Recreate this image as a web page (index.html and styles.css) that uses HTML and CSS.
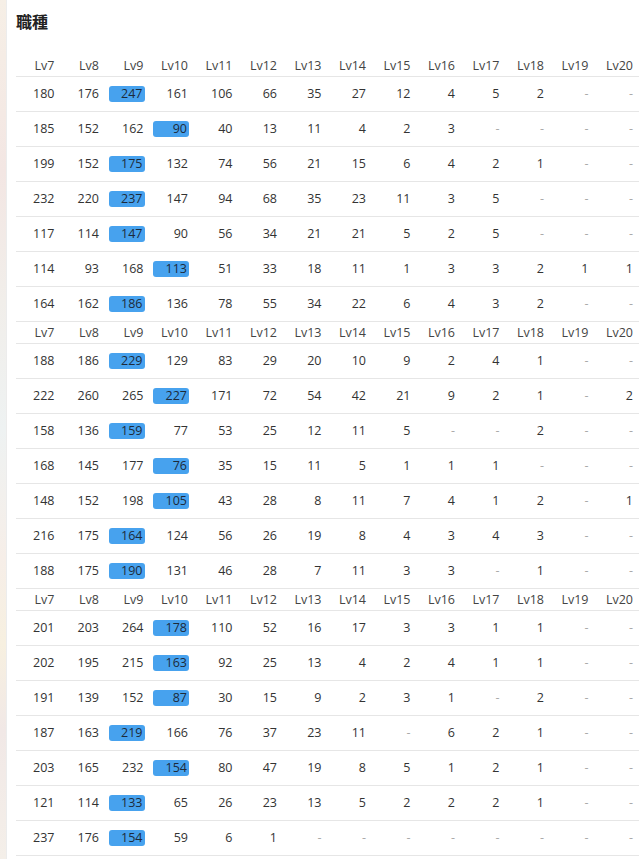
FILE: index.html
```html
<!DOCTYPE html>
<html lang="ja">
<head>
<meta charset="utf-8">
<link rel="stylesheet" href="styles.css">
</head>
<body>
<div class="page">
  <div class="edge"></div>
  <main class="content">
    <h2 class="title">職種</h2>
    <table class="lv-table">
      <colgroup>
        <col><col><col><col><col><col><col><col><col><col><col><col><col><col>
      </colgroup>
      <tbody>
        <tr class="head"><th>Lv7</th><th>Lv8</th><th>Lv9</th><th>Lv10</th><th>Lv11</th><th>Lv12</th><th>Lv13</th><th>Lv14</th><th>Lv15</th><th>Lv16</th><th>Lv17</th><th>Lv18</th><th>Lv19</th><th>Lv20</th></tr>
        <tr><td>180</td><td>176</td><td><span class="hl">247</span></td><td>161</td><td>106</td><td>66</td><td>35</td><td>27</td><td>12</td><td>4</td><td>5</td><td>2</td><td class="na">-</td><td class="na">-</td></tr>
        <tr><td>185</td><td>152</td><td>162</td><td><span class="hl">90</span></td><td>40</td><td>13</td><td>11</td><td>4</td><td>2</td><td>3</td><td class="na">-</td><td class="na">-</td><td class="na">-</td><td class="na">-</td></tr>
        <tr><td>199</td><td>152</td><td><span class="hl">175</span></td><td>132</td><td>74</td><td>56</td><td>21</td><td>15</td><td>6</td><td>4</td><td>2</td><td>1</td><td class="na">-</td><td class="na">-</td></tr>
        <tr><td>232</td><td>220</td><td><span class="hl">237</span></td><td>147</td><td>94</td><td>68</td><td>35</td><td>23</td><td>11</td><td>3</td><td>5</td><td class="na">-</td><td class="na">-</td><td class="na">-</td></tr>
        <tr><td>117</td><td>114</td><td><span class="hl">147</span></td><td>90</td><td>56</td><td>34</td><td>21</td><td>21</td><td>5</td><td>2</td><td>5</td><td class="na">-</td><td class="na">-</td><td class="na">-</td></tr>
        <tr><td>114</td><td>93</td><td>168</td><td><span class="hl">113</span></td><td>51</td><td>33</td><td>18</td><td>11</td><td>1</td><td>3</td><td>3</td><td>2</td><td>1</td><td>1</td></tr>
        <tr><td>164</td><td>162</td><td><span class="hl">186</span></td><td>136</td><td>78</td><td>55</td><td>34</td><td>22</td><td>6</td><td>4</td><td>3</td><td>2</td><td class="na">-</td><td class="na">-</td></tr>
      </tbody>
      <tbody>
        <tr class="head"><th>Lv7</th><th>Lv8</th><th>Lv9</th><th>Lv10</th><th>Lv11</th><th>Lv12</th><th>Lv13</th><th>Lv14</th><th>Lv15</th><th>Lv16</th><th>Lv17</th><th>Lv18</th><th>Lv19</th><th>Lv20</th></tr>
        <tr><td>188</td><td>186</td><td><span class="hl">229</span></td><td>129</td><td>83</td><td>29</td><td>20</td><td>10</td><td>9</td><td>2</td><td>4</td><td>1</td><td class="na">-</td><td class="na">-</td></tr>
        <tr><td>222</td><td>260</td><td>265</td><td><span class="hl">227</span></td><td>171</td><td>72</td><td>54</td><td>42</td><td>21</td><td>9</td><td>2</td><td>1</td><td class="na">-</td><td>2</td></tr>
        <tr><td>158</td><td>136</td><td><span class="hl">159</span></td><td>77</td><td>53</td><td>25</td><td>12</td><td>11</td><td>5</td><td class="na">-</td><td class="na">-</td><td>2</td><td class="na">-</td><td class="na">-</td></tr>
        <tr><td>168</td><td>145</td><td>177</td><td><span class="hl">76</span></td><td>35</td><td>15</td><td>11</td><td>5</td><td>1</td><td>1</td><td>1</td><td class="na">-</td><td class="na">-</td><td class="na">-</td></tr>
        <tr><td>148</td><td>152</td><td>198</td><td><span class="hl">105</span></td><td>43</td><td>28</td><td>8</td><td>11</td><td>7</td><td>4</td><td>1</td><td>2</td><td class="na">-</td><td>1</td></tr>
        <tr><td>216</td><td>175</td><td><span class="hl">164</span></td><td>124</td><td>56</td><td>26</td><td>19</td><td>8</td><td>4</td><td>3</td><td>4</td><td>3</td><td class="na">-</td><td class="na">-</td></tr>
        <tr><td>188</td><td>175</td><td><span class="hl">190</span></td><td>131</td><td>46</td><td>28</td><td>7</td><td>11</td><td>3</td><td>3</td><td class="na">-</td><td>1</td><td class="na">-</td><td class="na">-</td></tr>
      </tbody>
      <tbody>
        <tr class="head"><th>Lv7</th><th>Lv8</th><th>Lv9</th><th>Lv10</th><th>Lv11</th><th>Lv12</th><th>Lv13</th><th>Lv14</th><th>Lv15</th><th>Lv16</th><th>Lv17</th><th>Lv18</th><th>Lv19</th><th>Lv20</th></tr>
        <tr><td>201</td><td>203</td><td>264</td><td><span class="hl">178</span></td><td>110</td><td>52</td><td>16</td><td>17</td><td>3</td><td>3</td><td>1</td><td>1</td><td class="na">-</td><td class="na">-</td></tr>
        <tr><td>202</td><td>195</td><td>215</td><td><span class="hl">163</span></td><td>92</td><td>25</td><td>13</td><td>4</td><td>2</td><td>4</td><td>1</td><td>1</td><td class="na">-</td><td class="na">-</td></tr>
        <tr><td>191</td><td>139</td><td>152</td><td><span class="hl">87</span></td><td>30</td><td>15</td><td>9</td><td>2</td><td>3</td><td>1</td><td class="na">-</td><td>2</td><td class="na">-</td><td class="na">-</td></tr>
        <tr><td>187</td><td>163</td><td><span class="hl">219</span></td><td>166</td><td>76</td><td>37</td><td>23</td><td>11</td><td class="na">-</td><td>6</td><td>2</td><td>1</td><td class="na">-</td><td class="na">-</td></tr>
        <tr><td>203</td><td>165</td><td>232</td><td><span class="hl">154</span></td><td>80</td><td>47</td><td>19</td><td>8</td><td>5</td><td>1</td><td>2</td><td>1</td><td class="na">-</td><td class="na">-</td></tr>
        <tr><td>121</td><td>114</td><td><span class="hl">133</span></td><td>65</td><td>26</td><td>23</td><td>13</td><td>5</td><td>2</td><td>2</td><td>2</td><td>1</td><td class="na">-</td><td class="na">-</td></tr>
        <tr><td>237</td><td>176</td><td><span class="hl">154</span></td><td>59</td><td>6</td><td>1</td><td class="na">-</td><td class="na">-</td><td class="na">-</td><td class="na">-</td><td class="na">-</td><td class="na">-</td><td class="na">-</td><td class="na">-</td></tr>
      </tbody>
    </table>
  </main>
</div>
</body>
</html>
```

FILE: styles.css
```css
html, body {
  margin: 0;
  padding: 0;
  background: #ffffff;
}

body {
  font-family: "Noto Sans CJK JP", "Noto Sans", sans-serif;
  color: #333333;
  overflow: hidden;
}

.page {
  display: flex;
  min-height: 859px;
}

.edge {
  flex: 0 0 6px;
  background: linear-gradient(180deg, #f6efe6 0%, #f3e6e3 20%, #f1eeea 35%, #eef2f2 50%, #f6eee8 65%, #f7f0e0 75%, #f1e8e6 85%, #f4efe9 100%);
  border-right: 1px solid #ececec;
}

.content {
  flex: 1;
  padding-left: 9px;
  min-width: 0;
}

.title {
  margin: 9px 0 0;
  font-size: 16px;
  line-height: 24px;
  font-weight: 700;
  color: #222222;
}

.lv-table {
  margin-top: 22px;
  border-collapse: collapse;
  table-layout: fixed;
  width: 623px;
  font-family: "Open Sans", "Noto Sans", sans-serif;
  font-size: 12.5px;
}

.lv-table col {
  width: 44.5px;
}

.lv-table th,
.lv-table td {
  text-align: right;
  padding: 0 6px 0 0;
  white-space: nowrap;
}

.lv-table tr {
  border-bottom: 1px solid #e6e6e6;
}

.head th {
  height: 21px;
  font-weight: 400;
  color: #444444;
  line-height: 21px;
}

.lv-table td {
  height: 34px;
  line-height: 16px;
  color: #333333;
}

.lv-table td.na {
  color: #aaaaaa;
}

.hl {
  display: inline-block;
  box-sizing: border-box;
  width: 36px;
  height: 16px;
  line-height: 16px;
  padding-right: 2px;
  margin-right: -1px;
  background: #47a2ee;
  border-radius: 3px;
  color: #1d2a3a;
  text-align: right;
  vertical-align: middle;
}
```
